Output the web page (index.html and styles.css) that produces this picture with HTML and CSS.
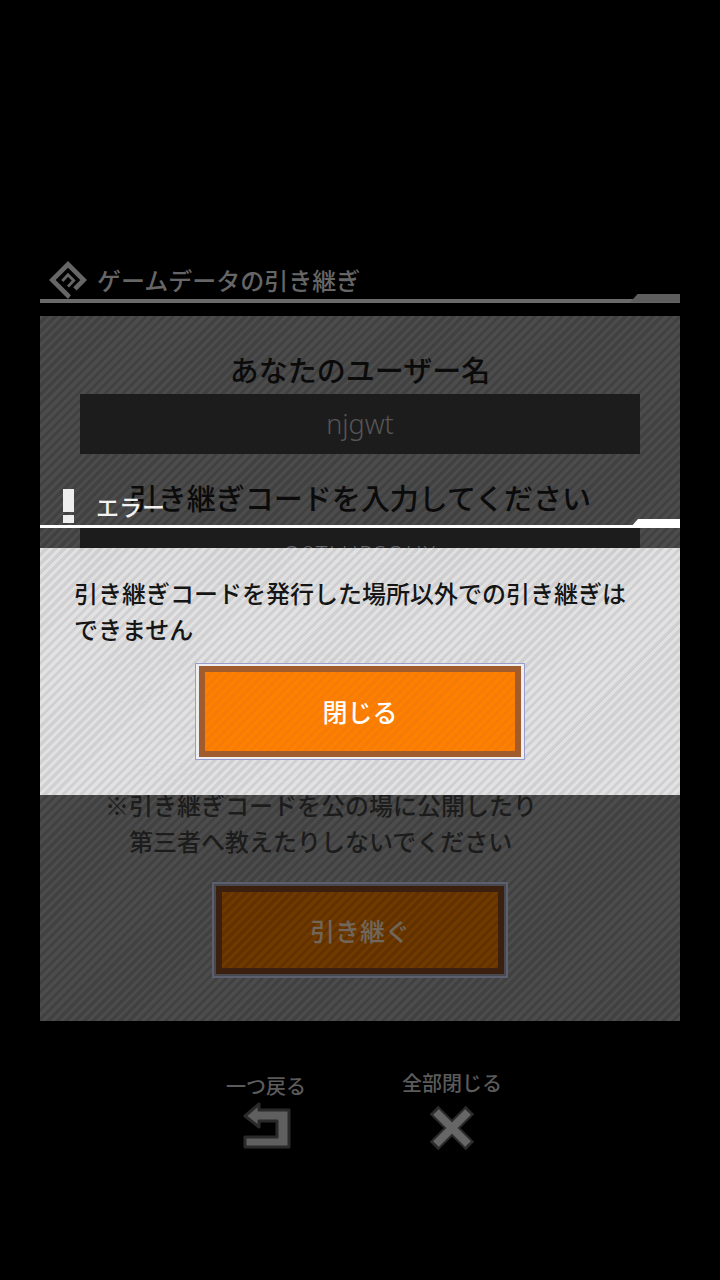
FILE: index.html
```html
<!DOCTYPE html>
<html lang="ja">
<head>
<meta charset="utf-8">
<title>ゲームデータの引き継ぎ</title>
<link rel="stylesheet" href="styles.css">
</head>
<body>
<div class="screen">
  <header class="head">
    <svg class="logo" viewBox="0 0 40 40" width="38" height="38"><path d="M20 0 40 20 29 31 25.500 27.500 33 20 20 7 7 20 20 33 23 36 20 40 0 20Z" fill="#666"/><path d="M14 21 20 14.500 26 20.500 20 27" fill="none" stroke="#666" stroke-width="3"/></svg>
    <h1 class="head-title">ゲームデータの引き継ぎ</h1>
  </header>
  <div class="rule rule-dim"><span class="rule-tab rule-tab-dim"></span></div>
  <main class="panel">
    <h2 class="label first">あなたのユーザー名</h2>
    <div class="field">njgwt</div>
    <h2 class="label second">引き継ぎコードを入力してください</h2>
    <div class="field code">Q8TLHRSQHX</div>
    <ul class="notes">
      <li>※引き継ぎコードの有効期限は24時間です</li>
      <li>※複数回発行した場合は最新のコード</li>
      <li class="indent">のみ有効になります。期限切れの場合は</li>
      <li class="indent">再度発行してご確認ください</li>
      <li>※引き継ぎコードを公の場に公開したり</li>
      <li class="indent">第三者へ教えたりしないでください</li>
    </ul>
    <div class="submit-wrap"><div class="submit"><span>引き継ぐ</span></div></div>
  </main>
  <nav class="foot">
    <div class="foot-item back">
      <span class="foot-label">一つ戻る</span>
      <svg viewBox="0 0 52 50" width="52" height="50"><path d="M5 14 19 2V8H49V45H5V35H37V19H19V25Z" fill="#5f5f5f" stroke="#2a2a2a" stroke-width="3" stroke-linejoin="round"/></svg>
    </div>
    <div class="foot-item close">
      <span class="foot-label">全部閉じる</span>
      <svg viewBox="0 0 48 46" width="48" height="46"><path d="M6 5 42 41M42 5 6 41" stroke="#2b2b2b" stroke-width="12"/><path d="M8 7 40 39M40 7 8 39" stroke="#666" stroke-width="8"/></svg>
    </div>
  </nav>

  <section class="dialog">
    <div class="dialog-head">
      <span class="bang"><i></i><b></b></span>
      <span class="dialog-title">エラー</span>
    </div>
    <div class="rule rule-bright"><span class="rule-tab rule-tab-bright"></span></div>
    <div class="dialog-body">
      <p class="message">引き継ぎコードを発行した場所以外での引き継ぎは<br>できません</p>
      <div class="ok-wrap"><div class="ok"><span>閉じる</span></div></div>
    </div>
  </section>
</div>
</body>
</html>
```
FILE: styles.css
```css
* { box-sizing: border-box; margin: 0; padding: 0; }
html, body { background: #000; }
body { width: 720px; height: 1280px; overflow: hidden; font-family: "Noto Sans CJK JP", "Noto Sans", sans-serif; }
.screen { position: relative; width: 720px; height: 1280px; padding: 262px 40px 0; }

.head { display: flex; align-items: center; height: 36px; padding-left: 9px; gap: 10px; }
.logo { width: 38px; height: 38px; flex: none; }
.head-title { font-size: 24px; font-weight: 500; color: #666; line-height: 36px; }

.rule { position: relative; height: 4px; }
.rule-dim { background: #6a6a6a; margin-top: 0.5px; }
.rule-bright { background: #fff; height: 3px; }
.rule-tab { position: absolute; right: 0; bottom: 0; width: 50px; height: 9px; clip-path: polygon(8px 0, 100% 0, 100% 100%, 0 100%); }
.rule-tab-dim { background: #5e5e5e; }
.rule-tab-bright { background: #fff; }

.panel { height: 705px; margin-top: 13.500px; padding: 29px 40px 0; background: repeating-linear-gradient(135deg, #4c4c4c 0 3.200px, #414141 3.200px 6.400px); }
.label { font-size: 29px; font-weight: 500; text-align: center; line-height: 48px; height: 49px; color: #0b0b0b; white-space: nowrap; }
.second { margin-top: 20px; height: 51px; line-height: 46px; }
.field { height: 60px; background: #1c1c1c; color: #555; text-align: center; font-family: "Noto Sans", sans-serif; font-weight: 300; font-size: 27px; line-height: 60px; }
.code { font-size: 22px; letter-spacing: 1.500px; line-height: 56px; color: #66676c; }

.notes { list-style: none; margin: 58px 0 0 25px; font-size: 24px; font-weight: 500; line-height: 36px; color: #1c1c1c; }
.notes li { height: 36px; white-space: nowrap; }
.notes .indent { padding-left: 24px; }

.submit-wrap { display: flex; justify-content: center; margin-top: 23px; }
.submit { width: 296px; height: 96px; border: 2px solid #5c5f6e; background: #47494f; padding: 2px; }
.submit span { display: flex; align-items: center; justify-content: center; height: 100%; border: 6px solid #3c200f; background: repeating-linear-gradient(135deg, #6f3900 0 3.200px, #613200 3.200px 6.400px); color: #70665c; font-size: 25px; font-weight: 500; }

.foot { display: flex; margin-top: 53px; padding-left: 181px; gap: 96px; }
.foot-item { display: flex; flex-direction: column; align-items: center; width: 90px; }
.foot-label { font-size: 20px; font-weight: 500; color: #5b5b5b; line-height: 24px; white-space: nowrap; }
.back svg { margin-top: 4px; }
.close { margin-top: -3px; }
.close svg { margin-top: 10px; }

.dialog { position: absolute; left: 40px; top: 485px; width: 640px; }
.dialog-head { display: flex; align-items: flex-end; height: 40px; padding-left: 23px; gap: 22px; }
.bang { display: flex; flex-direction: column; gap: 3px; width: 11px; flex: none; margin-bottom: 2px; }
.bang i { display: block; height: 23px; background: #eee; }
.bang b { display: block; height: 8px; background: #eee; }
.dialog-title { font-size: 23px; font-weight: 500; color: #f2f2f2; line-height: 38px; }
.dialog-body { height: 247px; margin-top: 20px; padding: 27px 34px 0; background: repeating-linear-gradient(135deg, rgba(232, 232, 232, 0.96) 0 3.200px, rgba(214, 214, 217, 0.96) 3.200px 6.400px); }
.message { font-size: 24px; font-weight: 500; line-height: 36px; color: #151515; white-space: nowrap; }
.ok-wrap { display: flex; justify-content: center; margin-top: 16px; }
.ok { width: 330px; height: 97px; border: 1px solid #9a9ccc; background: #eee; padding: 2px 3px; }
.ok span { display: flex; align-items: center; justify-content: center; height: 100%; padding-bottom: 2px; border: 6px solid #a15c2e; background: repeating-linear-gradient(135deg, #ff8000 0 3.200px, #f67c08 3.200px 6.400px); color: #fff; font-size: 25px; font-weight: 500; }
```
